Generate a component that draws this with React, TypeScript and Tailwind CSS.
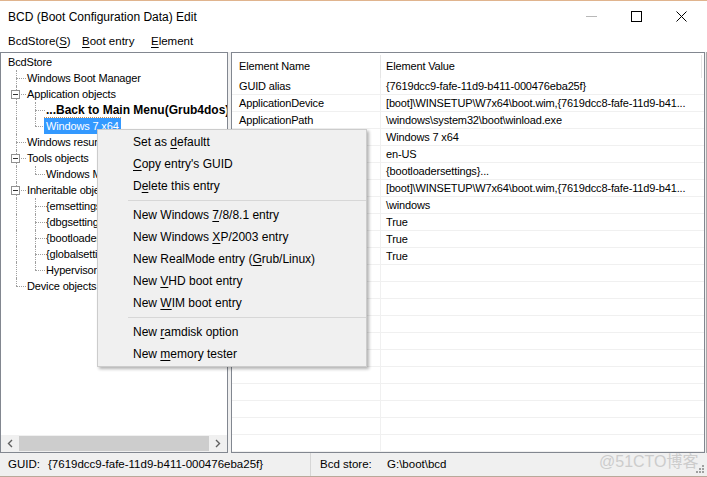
import React from "react";

const F = "font-['Liberation_Sans',Arial,sans-serif]";

type Guide = "line" | "tee" | "end";
type TreeRow = { label: string; guides: Guide[]; box?: boolean; bold?: boolean; selected?: boolean };

const tree: TreeRow[] = [
  { label: "BcdStore", guides: [] },
  { label: "Windows Boot Manager", guides: ["tee"] },
  { label: "Application objects", guides: ["tee"], box: true },
  { label: "...Back to Main Menu(Grub4dos)", guides: ["line", "tee"], bold: true },
  { label: "Windows 7 x64", guides: ["line", "end"], selected: true },
  { label: "Windows resume loader", guides: ["tee"] },
  { label: "Tools objects", guides: ["tee"], box: true },
  { label: "Windows Memory Tester", guides: ["line", "end"] },
  { label: "Inheritable objects", guides: ["tee"], box: true },
  { label: "{emsettings}", guides: ["line", "tee"] },
  { label: "{dbgsettings}", guides: ["line", "tee"] },
  { label: "{bootloadersettings}", guides: ["line", "tee"] },
  { label: "{globalsettings}", guides: ["line", "tee"] },
  { label: "Hypervisor Settings", guides: ["line", "end"] },
  { label: "Device objects", guides: ["end"] },
];

const elements = [
  ["GUID alias", "{7619dcc9-fafe-11d9-b411-000476eba25f}"],
  ["ApplicationDevice", "[boot]\\WINSETUP\\W7x64\\boot.wim,{7619dcc8-fafe-11d9-b41..."],
  ["ApplicationPath", "\\windows\\system32\\boot\\winload.exe"],
  ["Description", "Windows 7 x64"],
  ["PreferredLocale", "en-US"],
  ["InheritedObjects", "{bootloadersettings}..."],
  ["OSDevice", "[boot]\\WINSETUP\\W7x64\\boot.wim,{7619dcc8-fafe-11d9-b41..."],
  ["SystemRoot", "\\windows"],
  ["DetectHal", "True"],
  ["WinPE", "True"],
  ["EmsEnabled", "True"],
];

type MenuItem = { pre: string; acc: string; post: string } | "sep";

const menu: MenuItem[] = [
  { pre: "Set as ", acc: "d", post: "efaultt" },
  { pre: "", acc: "C", post: "opy entry's GUID" },
  { pre: "D", acc: "e", post: "lete this entry" },
  "sep",
  { pre: "New Windows ", acc: "7", post: "/8/8.1 entry" },
  { pre: "New Windows ", acc: "X", post: "P/2003 entry" },
  { pre: "New RealMode entry (", acc: "G", post: "rub/Linux)" },
  { pre: "New ", acc: "V", post: "HD boot entry" },
  { pre: "New ", acc: "W", post: "IM boot entry" },
  "sep",
  { pre: "New ", acc: "r", post: "amdisk option" },
  { pre: "New ", acc: "m", post: "emory tester" },
];

function GuideCell({ kind, box }: { kind: Guide; box?: boolean }) {
  return (
    <div className="relative w-[19px] h-4 shrink-0">
      <div
        className={`absolute left-[9px] top-0 border-l border-dotted border-[#a0a0a0] ${
          kind === "end" ? "h-[8px]" : "h-4"
        }`}
      />
      {kind !== "line" && (
        <div className="absolute left-[9px] top-[8px] w-[10px] border-t border-dotted border-[#a0a0a0]" />
      )}
      {box && (
        <div className="absolute left-[4px] top-[4px] w-[9px] h-[9px] border border-[#919191] bg-white flex items-center justify-center">
          <div className="w-[5px] h-px bg-[#333]" />
        </div>
      )}
    </div>
  );
}

function TreeView() {
  return (
    <div className="flex flex-col pt-px pl-[6px] flex-1 overflow-hidden text-[11px] tracking-[-0.15px]">
      {tree.map((r, i) => (
        <div key={i} className="flex h-4 items-center whitespace-nowrap">
          {r.guides.map((g, j) => (
            <GuideCell key={j} kind={g} box={r.box && j === r.guides.length - 1} />
          ))}
          <span
            className={`relative -ml-px px-[2px] h-4 leading-4 ${
              r.bold ? "font-bold text-[12px] tracking-normal" : ""
            } ${r.selected ? "bg-[#3399ff] text-white" : "text-black"}`}
          >
            {r.selected && (
              <span className="absolute left-0 right-0 -top-px border-t border-dotted border-[#c58a4a]" />
            )}
            {r.label}
          </span>
        </div>
      ))}
    </div>
  );
}

function HScroll() {
  return (
    <div className="h-[17px] flex items-center bg-[#f0f0f0] shrink-0">
      <div className="w-[18px] h-full flex items-center justify-center">
        <svg width="6" height="9" viewBox="0 0 6 9">
          <path d="M5 1 L1.5 4.5 L5 8" stroke="#606060" strokeWidth="1.4" fill="none" />
        </svg>
      </div>
      <div className="flex-1 h-[15px] bg-[#cdcdcd]" />
      <div className="w-[18px] h-full flex items-center justify-center">
        <svg width="6" height="9" viewBox="0 0 6 9">
          <path d="M1 1 L4.5 4.5 L1 8" stroke="#606060" strokeWidth="1.4" fill="none" />
        </svg>
      </div>
    </div>
  );
}

function ElementList() {
  const empty = Array.from({ length: 14 });
  return (
    <div className="flex flex-col flex-1 overflow-hidden text-[11px] tracking-[-0.15px]">
      <div className="h-[25px] flex items-center pt-[2px] shrink-0">
        <div className="w-[149px] h-full flex items-center pl-[7px] border-r border-[#e5e5e5]">Element Name</div>
        <div className="w-[321px] h-full flex items-center pl-[5px] border-r border-[#e5e5e5]">Element Value</div>
      </div>
      {elements.map(([n, v], i) => (
        <div key={i} className="h-[17px] flex shrink-0 border-b border-[#f0f0f0] whitespace-nowrap">
          <div className="w-[149px] shrink-0 pl-[7px] leading-[16px] border-r border-[#f0f0f0] overflow-hidden">{n}</div>
          <div className="flex-1 pl-[5px] leading-[16px] overflow-hidden">{v}</div>
        </div>
      ))}
      {empty.map((_, i) => (
        <div key={`e${i}`} className="h-[17px] flex shrink-0 border-b border-[#f0f0f0]">
          <div className="w-[149px] border-r border-[#f0f0f0]" />
        </div>
      ))}
    </div>
  );
}

function ContextMenu() {
  return (
    <div className="absolute left-[97px] top-[128px] w-[270px] bg-[#f0f0f0] border border-[#cccccc] shadow-[2px_2px_3px_rgba(0,0,0,0.3)] py-[1px] flex flex-col text-[12px]">
      {menu.map((m, i) =>
        m === "sep" ? (
          <div key={i} className="h-[7px] flex items-center pl-[30px]">
            <div className="w-full h-px bg-[#d7d7d7]" />
          </div>
        ) : (
          <div key={i} className="h-[22px] flex items-center pl-[35px]">
            <span className="whitespace-pre">
              {m.pre}
              <u className="underline-offset-2">{m.acc}</u>
              {m.post}
            </span>
          </div>
        )
      )}
    </div>
  );
}

export default function App() {
  return (
    <div
      className={`${F} text-[11.5px] text-black w-[707px] h-[477px] bg-white relative overflow-hidden flex flex-col border-t border-[#e0b48e]`}
    >
      {/* TITLE BAR */}
      <div className="h-[31px] flex items-center shrink-0">
        <div className="pl-2 text-[12px] flex-1 pt-px">BCD (Boot Configuration Data) Edit</div>
        <div className="flex h-full">
          <div className="w-[45px] flex items-center justify-center">
            <div className="w-[11px] h-px bg-[#b8b8b8]" />
          </div>
          <div className="w-[45px] flex items-center justify-center">
            <div className="w-[11px] h-[11px] border border-black" />
          </div>
          <div className="w-[45px] flex items-center justify-center mr-[3px]">
            <svg width="11" height="11" viewBox="0 0 11 11">
              <path d="M0.5 0.5 L10.5 10.5 M10.5 0.5 L0.5 10.5" stroke="#000" strokeWidth="1" />
            </svg>
          </div>
        </div>
      </div>

      {/* MENU BAR */}
      <div className="h-[20px] flex items-center pl-2 shrink-0 text-[11.5px]">
        <span className="w-[74px]">
          BcdStore(<u className="underline-offset-2">S</u>)
        </span>
        <span className="w-[69px]">
          <u className="underline-offset-2">B</u>oot entry
        </span>
        <span>
          <u className="underline-offset-2">E</u>lement
        </span>
      </div>

      {/* PANES */}
      <div className="flex-1 flex gap-[3px] bg-[#f0f0f0] pr-px border-r border-[#a9a9a9] min-h-0">
        <div className="w-[228px] shrink-0 flex flex-col bg-white border border-[#828790]">
          <TreeView />
          <HScroll />
        </div>
        <div className="flex-1 flex flex-col bg-white border border-[#828790]">
          <ElementList />
        </div>
      </div>

      {/* STATUS BAR */}
      <div className="h-[24px] flex items-center bg-[#f0f0f0] shrink-0 relative border-b border-[#b9a99a]">
        <span className="pl-2 w-[48px]">GUID:</span>
        <span className="w-[262px]">{"{7619dcc9-fafe-11d9-b411-000476eba25f}"}</span>
        <div className="w-px h-full bg-[#d6d6d6]" />
        <span className="pl-[9px] w-[76px]">Bcd store:</span>
        <span>G:\boot\bcd</span>
        <span className="absolute left-[599px] top-[-3px] text-[16px] text-[#cccccc] font-['Liberation_Sans','Noto_Sans_CJK_SC',sans-serif]">
          @51CTO博客
        </span>
        <svg className="absolute right-[2px] bottom-[2px]" width="10" height="10" viewBox="0 0 10 10">
          <g fill="#a0a0a0">
            <rect x="7" y="1" width="2" height="2" />
            <rect x="4" y="4" width="2" height="2" />
            <rect x="7" y="4" width="2" height="2" />
            <rect x="1" y="7" width="2" height="2" />
            <rect x="4" y="7" width="2" height="2" />
            <rect x="7" y="7" width="2" height="2" />
          </g>
        </svg>
      </div>

      <ContextMenu />
    </div>
  );
}
